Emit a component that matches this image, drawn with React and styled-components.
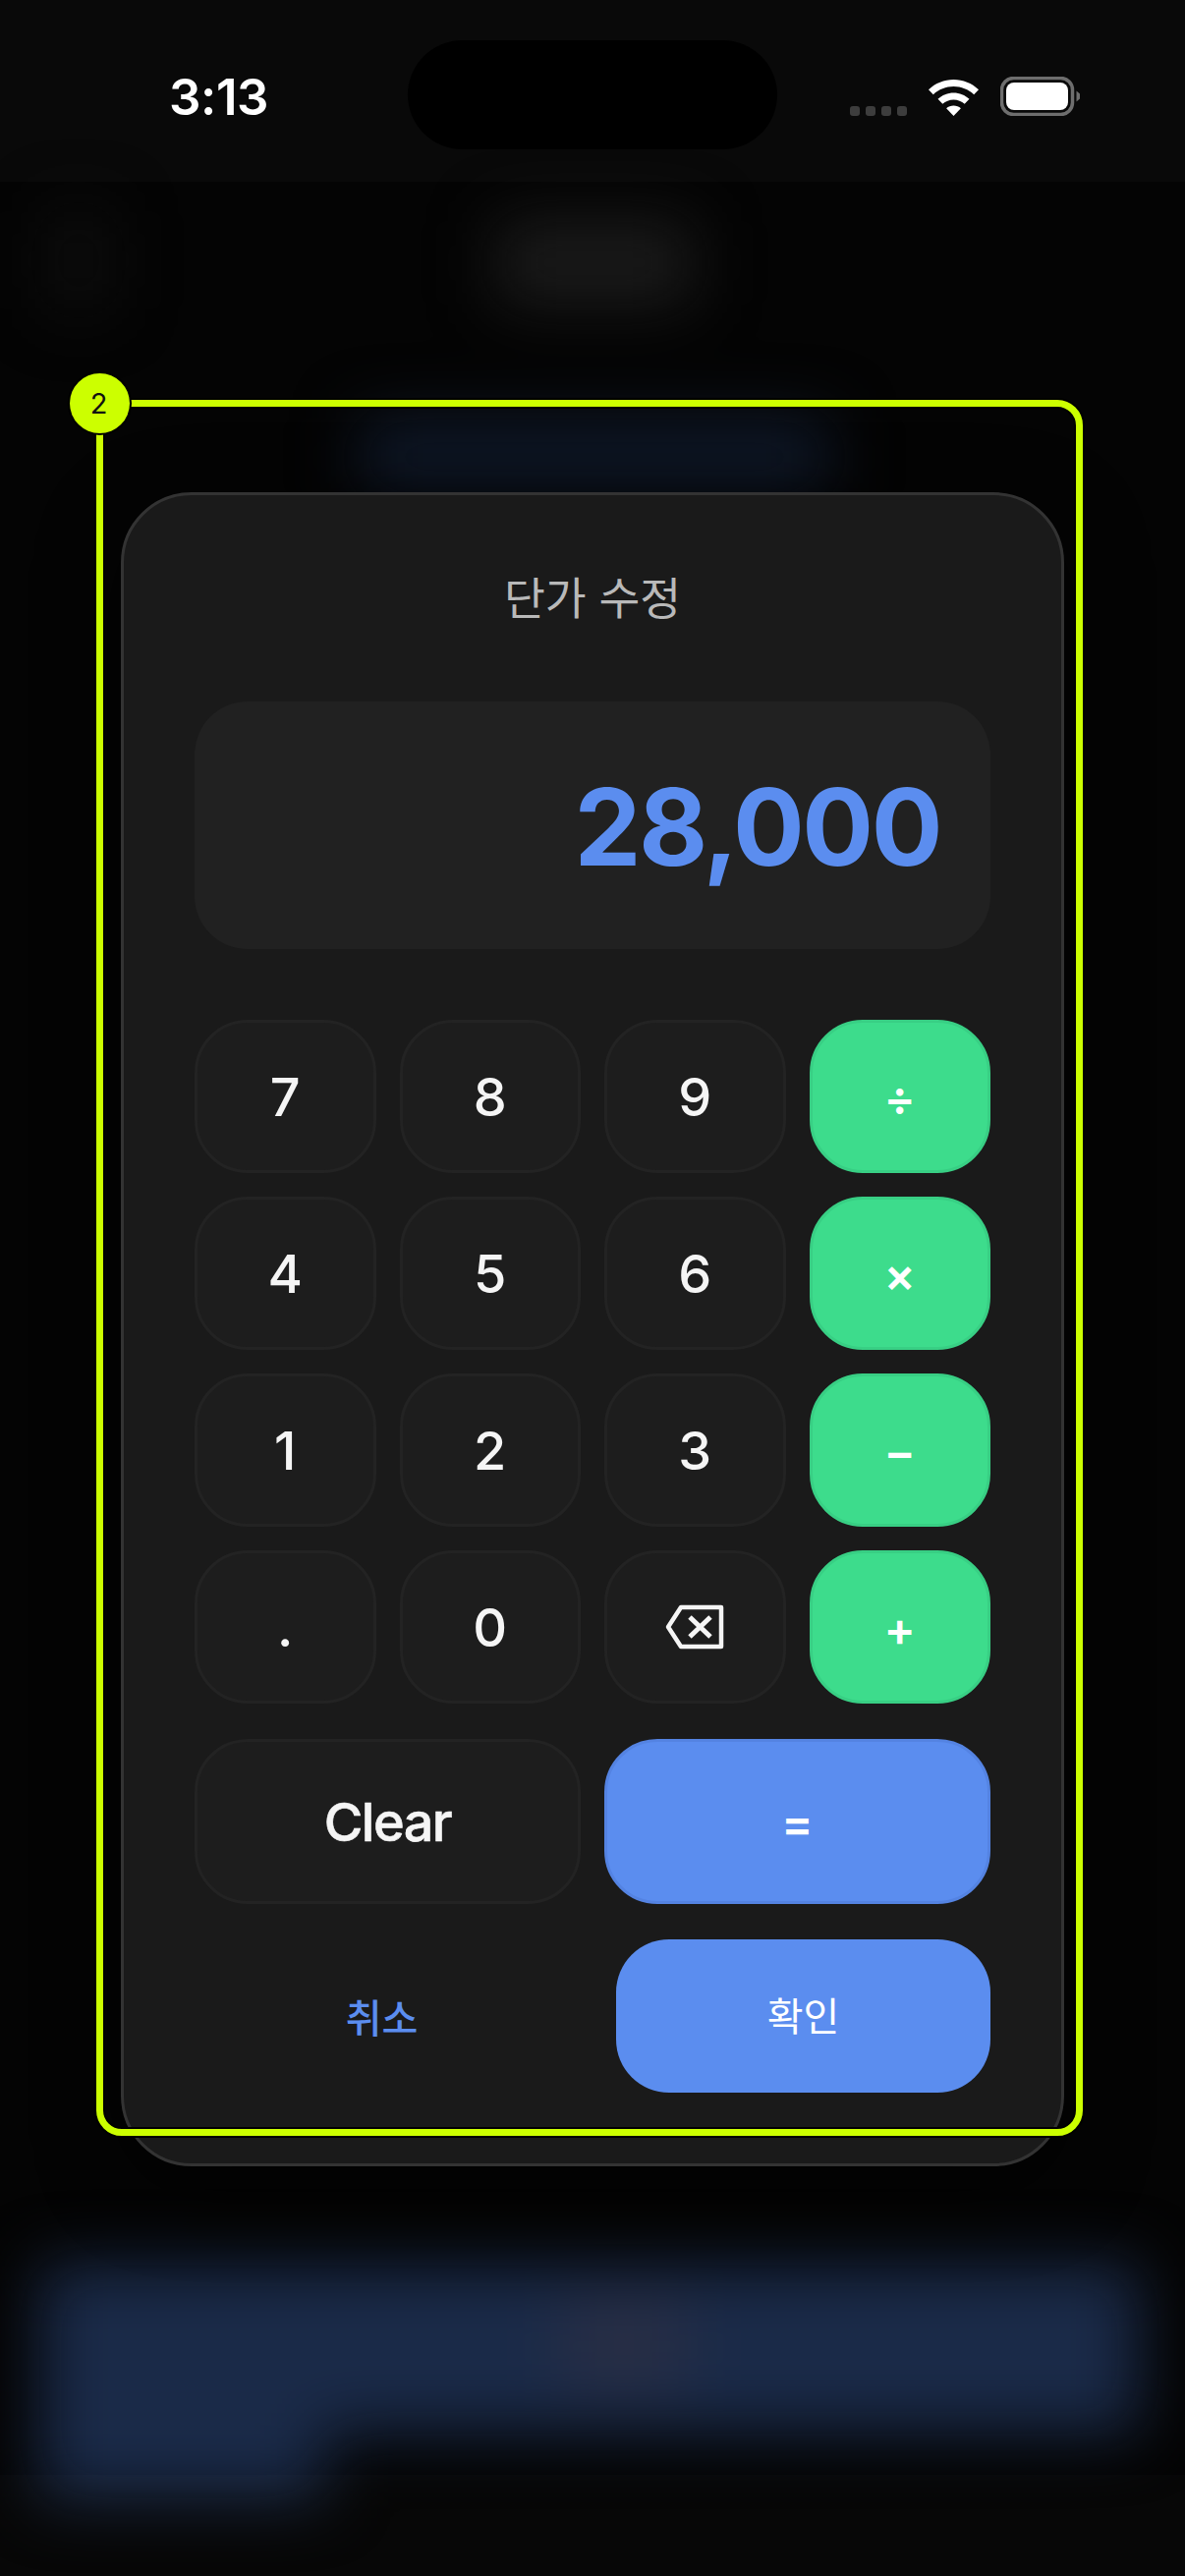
import styled, { createGlobalStyle } from "styled-components"

const Reset = createGlobalStyle`
  html, body { margin: 0; padding: 0; background: #000; }
  * { box-sizing: border-box; }
`

const sans = `Inter, "Noto Sans CJK KR", sans-serif`

const Screen = styled.div`
  position: relative;
  width: 1206px;
  height: 2622px;
  overflow: hidden;
  background: #040404;
  font-family: ${sans};
`

// what is left of the page behind the dialog, all of it blurred
const Backdrop = styled.div`
  position: absolute;
  inset: 0;
  filter: blur(32px);
`
const Smudge = styled.div`
  position: absolute;
  left: ${p => p.$x}px;
  top: ${p => p.$y}px;
  width: ${p => p.$w}px;
  height: ${p => p.$h}px;
  background: ${p => p.$c};
  border-radius: 12px;
`

// the two system bars are slightly lighter than the dimmed page
const TopBand = styled.div`
  position: absolute;
  left: 0;
  right: 0;
  top: 0;
  height: 185px;
  background: rgba(255, 255, 255, 0.024);
`
const BottomBand = styled.div`
  position: absolute;
  left: 0;
  right: 0;
  bottom: 0;
  height: 103px;
  background: rgba(255, 255, 255, 0.016);
`

const Content = styled.div`
  position: relative;
  display: flex;
  flex-direction: column;
  align-items: center;
`

const StatusBar = styled.div`
  width: 100%;
  height: 185px;
  padding: 41px 0 0 172px;
  display: flex;
  align-items: flex-start;
`
const Time = styled.div`
  width: 100px;
  margin-top: 30px;
  font-size: 51px;
  line-height: 56px;
  font-weight: 600;
  letter-spacing: -0.4px;
  color: #fff;
  white-space: nowrap;
`
const Island = styled.div`
  width: 376px;
  height: 111px;
  margin-left: 143px;
  border-radius: 56px;
  background: #000;
`
const StatusIcons = styled.div`
  height: 40px;
  margin: 37px 0 0 74px;
  display: flex;
  align-items: flex-end;
`
const SignalDots = styled.div`
  display: flex;
  gap: 6px;
  margin-right: 22px;
`
const SignalDot = styled.span`
  width: 10px;
  height: 10px;
  border-radius: 3px;
  background: #3d3d3d;
`

const Dialog = styled.div`
  width: 960px;
  height: 1704px;
  margin-top: 316px;
  padding: 72px;
  border: 3px solid #333;
  border-radius: 72px;
  background: #1a1a1a;
  box-shadow: 0 24px 80px rgba(0, 0, 0, 0.7);
`
const Title = styled.div`
  height: 66px;
  margin-bottom: 72px;
  padding-top: 1px;
  font-size: 45.5px;
  line-height: 66px;
  text-align: center;
  color: #b9b9b9;
`
const Display = styled.div`
  height: 252px;
  margin-bottom: 72px;
  padding: 2px 51px 0 0;
  display: flex;
  align-items: center;
  justify-content: flex-end;
  border-radius: 54px;
  background: #212121;
  font-size: 108px;
  font-weight: 700;
  letter-spacing: -2.5px;
  color: #5b8def;
`
const Keypad = styled.div`
  display: grid;
  grid-template-columns: repeat(4, 1fr);
  grid-auto-rows: 156px;
  gap: 24px;
  margin-bottom: 36px;
`
const WideRow = styled.div`
  display: grid;
  grid-template-columns: 1fr 1fr;
  grid-auto-rows: 168px;
  gap: 24px;
  margin-bottom: 36px;
`
const Key = styled.button`
  display: flex;
  align-items: center;
  justify-content: center;
  padding: 0;
  font-family: ${sans};
  font-size: 54px;
  font-weight: 500;
  color: #f5f5f5;
  border: 3px solid #232323;
  border-radius: 54px;
  background: #1d1d1d;
`
const ClearKey = styled(Key)`
  font-weight: 500;
  letter-spacing: -1.5px;
  -webkit-text-stroke: 0.6px #f5f5f5;
`
const OpKey = styled(Key)`
  padding-top: 3px;
  font-size: 48px;
  font-weight: 600;
  color: #fff;
  border-color: #38cf84;
  background: #3ddc8c;
`
const EqualsKey = styled(OpKey)`
  border-color: #5483e2;
  background: #5b8def;
`
const Actions = styled.div`
  display: grid;
  grid-template-columns: 1fr 1fr;
  grid-auto-rows: 156px;
  gap: 48px;
`
const CancelButton = styled.button`
  padding: 0;
  border: 0;
  background: none;
  font-family: ${sans};
  font-size: 40px;
  font-weight: 500;
  color: #5b8def;
`
const ConfirmButton = styled.button`
  padding: 0 0 5px;
  border: 0;
  border-radius: 54px;
  background: #5b8def;
  font-family: ${sans};
  font-size: 40px;
  font-weight: 400;
  color: #fff;
`

// annotation drawn over the screenshot
const Marker = styled.div`
  position: absolute;
  left: 98px;
  top: 407px;
  width: 1004px;
  height: 1767px;
  border: 7px solid #ccff00;
  border-radius: 26px;
  box-shadow: 0 0 0 2px #000, inset 0 0 0 2px #000;
`
const MarkerBadge = styled.div`
  position: absolute;
  left: 71px;
  top: 380px;
  width: 61px;
  height: 61px;
  padding-right: 2px;
  display: flex;
  align-items: center;
  justify-content: center;
  border-radius: 50%;
  background: #ccff00;
  box-shadow: 0 0 0 2px #000;
  font-size: 29px;
  color: #111;
`

const WifiIcon = () => (
  <svg width="51" height="37" viewBox="0 0 51 37" style={{ marginRight: 22 }}>
    <path fill="#fff" d="M25.5 0C35 0 44 3.7 51 10.2L46.2 15.2C40.6 10 33.3 7 25.5 7S10.4 10 4.8 15.2L0 10.2C7 3.7 16 0 25.5 0Z" />
    <path fill="#fff" d="M25.5 13.5C31.5 13.5 37.2 15.8 41.5 19.8L36.7 24.8C33.7 22.1 29.7 20.5 25.5 20.5S17.3 22.1 14.3 24.8L9.5 19.8C13.8 15.8 19.5 13.5 25.5 13.5Z" />
    <path fill="#fff" d="M25.5 26.5C28.3 26.5 30.9 27.5 32.9 29.3L25.5 37L18.1 29.3C20.1 27.5 22.7 26.5 25.5 26.5Z" />
  </svg>
)

const BatteryIcon = () => (
  <svg width="82" height="40" viewBox="0 0 82 40">
    <rect x="1.5" y="1.5" width="72" height="37" rx="12" fill="none" stroke="#6e6e6e" strokeWidth="3.5" />
    <rect x="6" y="6" width="63" height="28" rx="8" fill="#fff" />
    <path fill="#6e6e6e" d="M77.5 14.5L81 17.5V22.5L77.5 25.5Z" />
  </svg>
)

const BackspaceIcon = () => (
  <svg width="60" height="46" viewBox="0 0 60 46" fill="none" stroke="#f5f5f5" strokeWidth="4.5" strokeLinejoin="round">
    <path d="M3 23L16 3H57V43H16Z" />
    <path d="M25 13L46 33M46 13L25 33" strokeWidth="5" />
  </svg>
)

const rows = [
  ["7", "8", "9", "÷"],
  ["4", "5", "6", "×"],
  ["1", "2", "3", "−"],
  [".", "0", "back", "+"],
]

const smudges = [
  { x: 50, y: 215, w: 60, h: 100, c: "#0e0e0e" },
  { x: 505, y: 225, w: 200, h: 85, c: "#1b1b1b" },
  { x: 365, y: 425, w: 480, h: 80, c: "#0f1828" },
  { x: 40, y: 2305, w: 1120, h: 172, c: "#1a2a48" },
  { x: 40, y: 2440, w: 290, h: 103, c: "#1a2a48" },
  { x: 570, y: 2340, w: 130, h: 90, c: "#282e45" },
]

export default function App() {
  return (
    <>
      <Reset />
      <Screen>
        <Backdrop>
          {smudges.map((s, i) => (
            <Smudge key={i} $x={s.x} $y={s.y} $w={s.w} $h={s.h} $c={s.c} />
          ))}
        </Backdrop>
        <TopBand />
        <BottomBand />
        <Content>
          <StatusBar>
            <Time>3:13</Time>
            <Island />
            <StatusIcons>
              <SignalDots>
                <SignalDot />
                <SignalDot />
                <SignalDot />
                <SignalDot />
              </SignalDots>
              <WifiIcon />
              <BatteryIcon />
            </StatusIcons>
          </StatusBar>
          <Dialog>
            <Title>단가 수정</Title>
            <Display>28,000</Display>
            <Keypad>
              {rows.flat().map(k => {
                if (k === "back") return <Key key={k}><BackspaceIcon /></Key>
                if ("÷×−+".includes(k)) return <OpKey key={k}>{k}</OpKey>
                return <Key key={k}>{k}</Key>
              })}
            </Keypad>
            <WideRow>
              <ClearKey>Clear</ClearKey>
              <EqualsKey>=</EqualsKey>
            </WideRow>
            <Actions>
              <CancelButton>취소</CancelButton>
              <ConfirmButton>확인</ConfirmButton>
            </Actions>
          </Dialog>
        </Content>
        <Marker />
        <MarkerBadge>2</MarkerBadge>
      </Screen>
    </>
  )
}
